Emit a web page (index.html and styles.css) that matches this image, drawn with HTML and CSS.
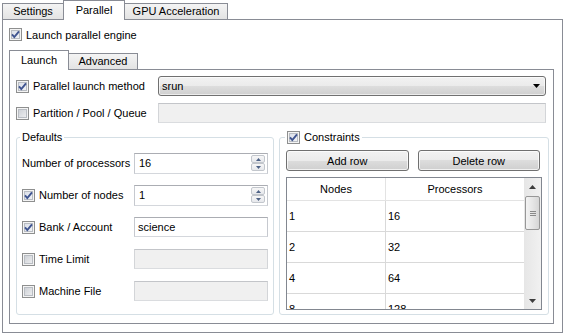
FILE: index.html
```html
<!DOCTYPE html>
<html lang="en">
<head>
    <meta charset="UTF-8">
    <title>Parallel Settings</title>
    <link rel="stylesheet" href="styles.css">
</head>
<body>

<div class="dialog">
    <div class="tabbar">
        <div class="tab tab-settings">Settings</div>
        <div class="tab tab-parallel active">Parallel</div>
        <div class="tab tab-gpu">GPU Acceleration</div>
    </div>

    <div class="panel">
        <div class="check-line">
            <span class="cb checked"><svg width="9" height="9" viewBox="0 0 9 9"><path d="M1 4.3 3.3 7 8 1.3" fill="none" stroke="#3f5490" stroke-width="1.9"/></svg></span>Launch parallel engine
        </div>

        <div class="tabbar inner-tabs">
            <div class="tab tab-launch active">Launch</div>
            <div class="tab tab-advanced">Advanced</div>
        </div>

        <div class="subpanel">
            <div class="form-row">
                <div class="row-label"><span class="cb checked"><svg width="9" height="9" viewBox="0 0 9 9"><path d="M1 4.3 3.3 7 8 1.3" fill="none" stroke="#3f5490" stroke-width="1.9"/></svg></span>Parallel launch method</div>
                <div class="combo">srun<svg class="combo-arrow" width="7" height="4" viewBox="0 0 7 4"><path d="M0 0h7L3.5 4z" fill="#000"/></svg></div>
            </div>
            <div class="form-row second">
                <div class="row-label"><span class="cb"></span>Partition / Pool / Queue</div>
                <div class="field wide disabled"></div>
            </div>

            <div class="groups">
                <fieldset class="group defaults">
                    <legend>Defaults</legend>
                    <div class="drow">
                        <div class="dlabel">Number of processors</div>
                        <div class="spin">16
                            <div class="spin-btns">
                                <div class="spin-btn"><svg width="5" height="3" viewBox="0 0 5 3"><path d="M0 3h5L2.5 0z" fill="#4d6185"/></svg></div>
                                <div class="spin-btn"><svg width="5" height="3" viewBox="0 0 5 3"><path d="M0 0h5L2.5 3z" fill="#4d6185"/></svg></div>
                            </div>
                        </div>
                    </div>
                    <div class="drow">
                        <div class="dlabel"><span class="cb checked"><svg width="9" height="9" viewBox="0 0 9 9"><path d="M1 4.3 3.3 7 8 1.3" fill="none" stroke="#3f5490" stroke-width="1.9"/></svg></span>Number of nodes</div>
                        <div class="spin">1
                            <div class="spin-btns">
                                <div class="spin-btn"><svg width="5" height="3" viewBox="0 0 5 3"><path d="M0 3h5L2.5 0z" fill="#4d6185"/></svg></div>
                                <div class="spin-btn"><svg width="5" height="3" viewBox="0 0 5 3"><path d="M0 0h5L2.5 3z" fill="#4d6185"/></svg></div>
                            </div>
                        </div>
                    </div>
                    <div class="drow">
                        <div class="dlabel"><span class="cb checked"><svg width="9" height="9" viewBox="0 0 9 9"><path d="M1 4.3 3.3 7 8 1.3" fill="none" stroke="#3f5490" stroke-width="1.9"/></svg></span>Bank / Account</div>
                        <div class="field">science</div>
                    </div>
                    <div class="drow">
                        <div class="dlabel"><span class="cb"></span>Time Limit</div>
                        <div class="field disabled"></div>
                    </div>
                    <div class="drow">
                        <div class="dlabel"><span class="cb"></span>Machine File</div>
                        <div class="field disabled"></div>
                    </div>
                </fieldset>

                <fieldset class="group constraints">
                    <legend><span class="cb checked"><svg width="9" height="9" viewBox="0 0 9 9"><path d="M1 4.3 3.3 7 8 1.3" fill="none" stroke="#3f5490" stroke-width="1.9"/></svg></span>Constraints</legend>
                    <div class="buttons">
                        <button class="btn">Add row</button>
                        <button class="btn">Delete row</button>
                    </div>
                    <div class="table">
                        <div class="grid">
                            <div class="thead">
                                <div class="cell">Nodes</div>
                                <div class="cell">Processors</div>
                            </div>
                            <div class="trow"><div class="cell">1</div><div class="cell">16</div></div>
                            <div class="trow"><div class="cell">2</div><div class="cell">32</div></div>
                            <div class="trow"><div class="cell">4</div><div class="cell">64</div></div>
                            <div class="trow"><div class="cell">8</div><div class="cell">128</div></div>
                        </div>
                        <div class="vscroll">
                            <div class="sb-btn"><svg width="7" height="4" viewBox="0 0 7 4"><path d="M0 4h7L3.5 0z" fill="#3d3d3d"/></svg></div>
                            <div class="sb-track">
                                <div class="sb-thumb"><span></span><span></span><span></span></div>
                            </div>
                            <div class="sb-btn"><svg width="7" height="4" viewBox="0 0 7 4"><path d="M0 0h7L3.5 4z" fill="#3d3d3d"/></svg></div>
                        </div>
                    </div>
                </fieldset>
            </div>
        </div>
    </div>
</div>

</body>
</html>
```

FILE: styles.css
```css
body {
    margin: 0;
    font-family: "Liberation Sans", Arial, sans-serif;
    font-size: 11px;
    color: #000;
    background-color: #fff;
}
.dialog {
    padding-left: 2px;
}

/* tabs */
.tabbar {
    display: flex;
    align-items: flex-end;
    height: 20px;
}
.tab {
    box-sizing: border-box;
    height: 16px;
    margin-bottom: 1px;
    line-height: 15px;
    text-align: center;
    border: 1px solid #898c95;
    border-bottom: none;
    background: linear-gradient(#f4f4f4, #e3e3e3);
}
.tab + .tab {
    margin-left: -1px;
}
.tab.active {
    height: 20px;
    margin-bottom: 0;
    padding-top: 2px;
    background: #fff;
    position: relative;
    z-index: 1;
}
.tab-settings { width: 62px; }
.tab-parallel { width: 62px; }
.tab-gpu { width: 104px; }
.tab-launch { width: 60px; }
.tab-advanced { width: 70px; }

.panel {
    box-sizing: border-box;
    width: 561px;
    height: 314px;
    margin-top: -1px;
    border: 1px solid #898c95;
    padding: 8px 8px 0 6px;
    background: #fff;
}
.inner-tabs {
    margin-top: 9px;
}
.subpanel {
    box-sizing: border-box;
    height: 255px;
    margin-top: -1px;
    border: 1px solid #898c95;
    padding: 6px 7px 0 6px;
    background: #fff;
}

/* checkboxes */
.cb {
    box-sizing: border-box;
    display: inline-flex;
    align-items: center;
    justify-content: center;
    width: 13px;
    height: 13px;
    margin-right: 4px;
    flex: none;
    border: 1px solid #8e8f8f;
    background: linear-gradient(135deg, #c6cad0, #f4f4f5);
    box-shadow: inset 0 0 0 1px #f4f4f4, inset 0 0 0 2px #b9bdc3;
}
.cb.checked {
    background: linear-gradient(135deg, #d6dbe6, #f6f7f9);
}
.check-line {
    display: flex;
    align-items: center;
    height: 13px;
}

/* form rows */
.form-row {
    display: flex;
    align-items: center;
    height: 20px;
}
.form-row.second {
    margin-top: 7px;
}
.row-label {
    display: flex;
    align-items: center;
    width: 142px;
}
.combo {
    box-sizing: border-box;
    flex: 1;
    height: 20px;
    display: flex;
    align-items: center;
    padding: 0 5px 0 3px;
    border: 1px solid #707070;
    border-radius: 3px;
    background: linear-gradient(#f2f2f2 0%, #ebebeb 50%, #dddddd 50%, #cfcfcf 100%);
    box-shadow: inset 0 0 0 1px rgba(255, 255, 255, 0.6);
}
.combo-arrow {
    margin-left: auto;
}
.field {
    box-sizing: border-box;
    width: 134px;
    height: 20px;
    display: flex;
    align-items: center;
    padding-left: 3px;
    border: 1px solid #abadb3;
    border-color: #abadb3 #c6c9cf #d4d7dc #c6c9cf;
    background: #fff;
}
.field.wide {
    flex: 1;
}
.field.disabled {
    background: #f0f0f0;
    border-color: #c3c5c9 #d3d5d8 #dadcdf #d3d5d8;
}

/* group boxes */
.groups {
    display: flex;
    gap: 5px;
    width: 533px;
    margin-top: 8px;
}
.group {
    box-sizing: border-box;
    margin: 0;
    min-width: 0;
    border: 1px solid #d5dfe5;
    border-radius: 3px;
}
.group legend {
    display: flex;
    align-items: center;
    padding: 0 2px;
    margin-left: -2px;
    line-height: 13px;
}
.constraints legend {
    margin-left: -1px;
}
.defaults {
    width: 258px;
    padding: 9px 5px 0 5px;
}
.constraints {
    width: 270px;
    padding: 6px 6px 4px 6px;
}
.drow {
    display: flex;
    align-items: center;
    height: 20px;
    margin-bottom: 12px;
}
.drow:last-child {
    margin-bottom: 0;
}
.dlabel {
    display: flex;
    align-items: center;
    width: 112px;
}
.spin {
    box-sizing: border-box;
    width: 134px;
    height: 21px;
    display: flex;
    align-items: center;
    padding-left: 4px;
    border: 1px solid #abadb3;
    border-color: #abadb3 #c6c9cf #d4d7dc #c6c9cf;
}
.spin-btns {
    margin-left: auto;
    margin-right: 2px;
    display: flex;
    flex-direction: column;
    gap: 0;
}
.spin-btn {
    box-sizing: border-box;
    width: 14px;
    height: 8px;
    display: flex;
    align-items: center;
    justify-content: center;
    border: 1px solid #c2c6cc;
    border-radius: 2px;
    background: linear-gradient(#f7f7f7, #e6e8ec);
}

/* buttons */
.buttons {
    display: flex;
    gap: 9px;
    margin-right: 2px;
}
.btn {
    flex: 1;
    height: 21px;
    padding: 0;
    font: inherit;
    color: #000;
    border: 1px solid #707070;
    border-radius: 3px;
    background: linear-gradient(#f2f2f2 0%, #ebebeb 50%, #dddddd 50%, #cfcfcf 100%);
    box-shadow: inset 0 0 0 1px rgba(255, 255, 255, 0.7);
}

/* table */
.table {
    box-sizing: border-box;
    display: flex;
    width: 256px;
    height: 133px;
    margin-top: 6px;
    border: 1px solid #828790;
    overflow: hidden;
}
.grid {
    flex: 1;
    overflow: hidden;
}
.thead, .trow {
    display: grid;
    grid-template-columns: 99px 1fr;
}
.thead .cell {
    height: 22px;
    line-height: 22px;
    text-align: center;
    border-bottom: 1px solid #e3e3e3;
}
.thead .cell:first-child {
    border-right: 1px solid #e3e3e3;
}
.trow .cell {
    height: 30px;
    line-height: 30px;
    padding-left: 2px;
    border-bottom: 1px solid #d9d9d9;
}
.trow .cell:first-child {
    border-right: 1px solid #d9d9d9;
}
.vscroll {
    width: 17px;
    display: flex;
    flex-direction: column;
    background: linear-gradient(90deg, #e6e6e6, #f1f1f1);
}
.sb-btn {
    height: 17px;
    display: flex;
    align-items: center;
    justify-content: center;
}
.sb-track {
    flex: 1;
}
.sb-thumb {
    box-sizing: border-box;
    width: 15px;
    height: 34px;
    margin: 1px 0 0 1px;
    display: flex;
    flex-direction: column;
    align-items: center;
    justify-content: center;
    gap: 1px;
    border: 1px solid #979797;
    border-radius: 2px;
    background: linear-gradient(90deg, #f3f3f3, #e6e6e6 50%, #d6d6d6);
}
.sb-thumb span {
    width: 6px;
    height: 1px;
    background: #8a8a8a;
}
```
